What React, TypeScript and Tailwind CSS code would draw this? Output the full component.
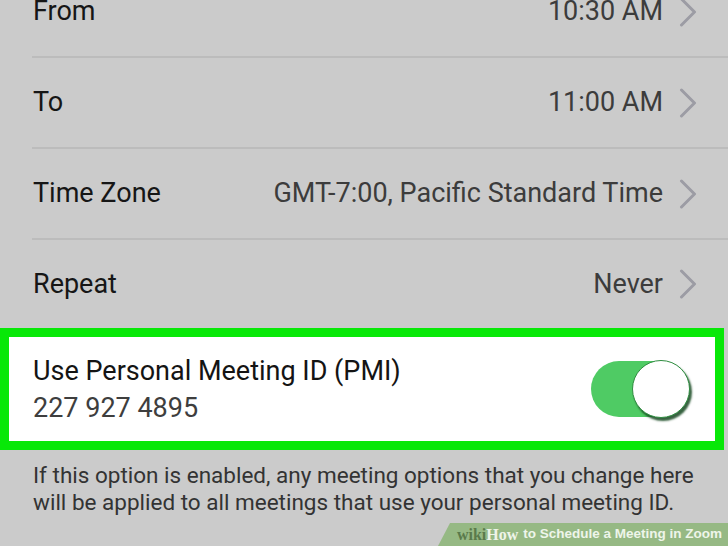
import React from "react";

const Chevron = () => (
  <svg width="18" height="30" viewBox="0 0 18 30" className="ml-[16px] shrink-0">
    <path d="M2.5 2 L15.5 15 L2.5 28" fill="none" stroke="#9c9ca4" strokeWidth="3" strokeLinecap="round" strokeLinejoin="round" />
  </svg>
);

function Row({ label, value, last, h }: { label: string; value: string; last?: boolean; h: string }) {
  return (
    <div className={"ml-[32px] " + (last ? "" : "border-b-[2px] border-[#bcbcbc]")}>
      <div className={"flex items-center justify-between pr-[31px] " + h}>
        <span className="text-[27px] text-[#161616] ml-px">{label}</span>
        <div className="flex items-center">
          <span className="text-[27px] text-[#3c3c3c]">{value}</span>
          <Chevron />
        </div>
      </div>
    </div>
  );
}

export default function App() {
  return (
    <div
      className="relative w-[728px] h-[546px] overflow-hidden bg-[#cbcbcb]"
      style={{ fontFamily: "Roboto, 'Noto Sans', Arial, sans-serif" }}
    >
      <div className="-mt-[33px]">
        <Row label="From" value="10:30 AM" h="h-[89px]" />
        <Row label="To" value="11:00 AM" h="h-[89px]" />
        <Row label="Time Zone" value="GMT-7:00, Pacific Standard Time" h="h-[89px]" />
        <Row label="Repeat" value="Never" h="h-[88px]" last />
      </div>

      <div className="mr-[4px] h-[122px] border-[9px] border-[#08e808] bg-white flex items-center justify-between pl-[24px] pr-[26px]">
        <div className="flex flex-col pt-[2px]">
          <span className="text-[27px] leading-[37px] text-[#141414]">Use Personal Meeting ID (PMI)</span>
          <span className="text-[27px] leading-[37px] text-[#3e3e3e]">227 927 4895</span>
        </div>
        <div className="relative w-[98px] h-[56px] rounded-full bg-[#4fcb64]">
          <div className="absolute right-[-1px] top-[-1px] w-[58px] h-[58px] rounded-full bg-white shadow-[2px_3px_2px_rgba(20,70,30,0.85)] border border-[#2f8d40]" />
        </div>
      </div>

      <div className="pl-[33px] pr-[30px] pt-[12px] text-[22.5px] leading-[27px] text-[#333333]">
        If this option is enabled, any meeting options that you change here will be applied to all meetings that use your personal meeting ID.
      </div>

      <div
        className="absolute right-0 bottom-0 h-[23px] w-[290px] bg-[#96b984] flex items-center justify-end pr-[6px]"
        style={{ clipPath: "polygon(12px 0, 100% 0, 100% 100%, 0 100%)" }}
      >
        <span className="text-[16px] font-bold text-[#5a7a4b]" style={{ fontFamily: "'Liberation Serif', serif" }}>wiki</span>
        <span className="text-[16px] font-bold text-[#eef4e9]" style={{ fontFamily: "'Liberation Serif', serif" }}>How</span>
        <span className="text-[13.5px] font-bold text-[#eef5ea] ml-[5px]" style={{ fontFamily: "'Liberation Sans', Arial, sans-serif" }}>to Schedule a Meeting in Zoom</span>
      </div>
    </div>
  );
}
